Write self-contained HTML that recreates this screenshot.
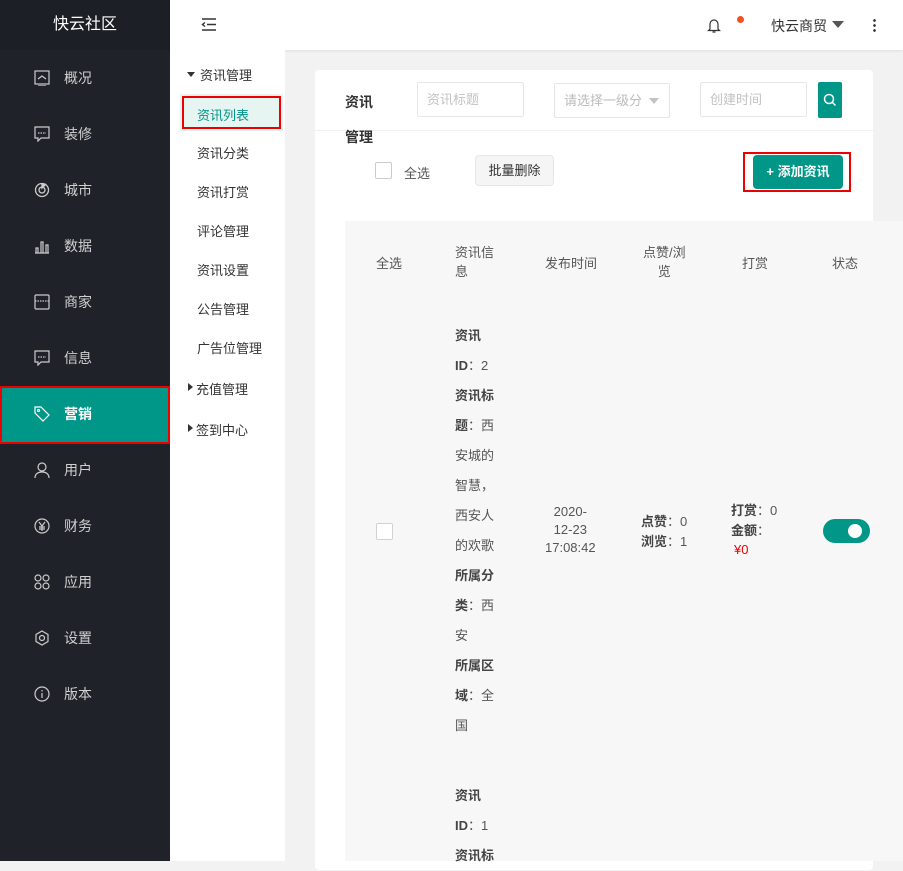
<!DOCTYPE html>
<html><head><meta charset="utf-8"><style>
*{margin:0;padding:0;box-sizing:border-box}
body{width:903px;height:861px;overflow:hidden;background:#f2f2f2;font-family:"Liberation Sans","Noto Sans CJK SC",sans-serif;font-size:13px;color:#333;position:relative}
.a{position:absolute;white-space:nowrap}
#side{position:absolute;left:0;top:0;width:170px;height:861px;background:#20222a}
#side .hd{height:50px;background:#1d1f26;color:#fff;font-size:16px;text-align:center;line-height:50px}
.mi{position:absolute;left:0;width:170px;height:56px;color:#d0d0d0;font-size:14px}
.mi svg{position:absolute;left:34px;top:20px}
.mi span{position:absolute;left:64px;top:18px}
#sub{position:absolute;left:170px;top:50px;width:115px;height:811px;background:#fff}
#top{position:absolute;left:170px;top:0;width:733px;height:50px;background:#fff;box-shadow:0 1px 3px rgba(0,0,0,.08)}
.card{position:absolute;left:315px;top:70px;width:558px;height:800px;background:#fff;border-radius:4px}
.inp{position:absolute;height:35px;border:1px solid #e6e6e6;border-radius:2px;color:#c2c2c2;font-size:13px;line-height:33px;padding-left:9px}
.tb{position:absolute;left:345px;top:221px;width:558px;height:640px;background:#f7f7f7}
.ln{position:absolute;left:455px;font-size:13px;color:#555}
b{font-weight:bold;color:#444}
</style></head><body>
<div id="side"><div class="hd">快云社区</div>
<div class="mi" style="top:50px"><svg width="16" height="16" viewBox="0 0 16 16" fill="none" stroke="#ccc" stroke-width="1.2"><rect x="1" y="1" width="14" height="13"/><path d="M4 9l4-3 4 3M4 16h8"/></svg><span>概况</span></div>
<div class="mi" style="top:106px"><svg width="16" height="16" viewBox="0 0 16 16" fill="none" stroke="#ccc" stroke-width="1.2"><path d="M1 1h14v11H7l-3 3v-3H1z"/><path d="M4 7h8" stroke-dasharray="1.5 1"/></svg><span>装修</span></div>
<div class="mi" style="top:162px"><svg width="16" height="16" viewBox="0 0 16 16" fill="none" stroke="#ccc" stroke-width="1.3"><circle cx="8" cy="8" r="6.5"/><circle cx="8" cy="8" r="3"/><path d="M8 1v5l4-4" fill="#ccc"/></svg><span>城市</span></div>
<div class="mi" style="top:218px"><svg width="16" height="16" viewBox="0 0 16 16" fill="none" stroke="#ccc" stroke-width="1.2"><path d="M1 15h14M2 10h2v5H2zM7 4h2v11H7zM12 7h2v8h-2z"/></svg><span>数据</span></div>
<div class="mi" style="top:274px"><svg width="16" height="16" viewBox="0 0 16 16" fill="none" stroke="#ccc" stroke-width="1.2"><rect x="1" y="1" width="14" height="14" rx="1"/><path d="M1 7h14" stroke-dasharray="1.5 1"/></svg><span>商家</span></div>
<div class="mi" style="top:330px"><svg width="16" height="16" viewBox="0 0 16 16" fill="none" stroke="#ccc" stroke-width="1.2"><path d="M1 1h14v11H7l-3 3v-3H1z"/><path d="M4 7h8" stroke-dasharray="1.5 1"/></svg><span>信息</span></div>
<div class="mi" style="top:386px;height:58px;background:#009688;border:2px solid #e00;color:#fff"><svg width="16" height="16" viewBox="0 0 16 16" fill="none" stroke="#fff" stroke-width="1.2" style="left:32px;top:18px"><path d="M1 1h6l8 8-6 6-8-8z"/><circle cx="4.5" cy="4.5" r="1"/></svg><span style="left:62px;top:16px;font-weight:bold">营销</span></div>
<div class="mi" style="top:442px"><svg width="16" height="16" viewBox="0 0 16 16" fill="none" stroke="#ccc" stroke-width="1.2"><circle cx="8" cy="5" r="4"/><path d="M1 16c0-4 3-6 7-6s7 2 7 6"/></svg><span>用户</span></div>
<div class="mi" style="top:498px"><svg width="16" height="16" viewBox="0 0 16 16" fill="none" stroke="#ccc" stroke-width="1.2"><circle cx="8" cy="8" r="7"/><path d="M5 4l3 4 3-4M8 8v5M5 9h6M5 11h6"/></svg><span>财务</span></div>
<div class="mi" style="top:554px"><svg width="16" height="16" viewBox="0 0 16 16" fill="none" stroke="#ccc" stroke-width="1.2"><circle cx="4" cy="4" r="3"/><circle cx="12" cy="4" r="3"/><circle cx="4" cy="12" r="3"/><circle cx="12" cy="12" r="3"/></svg><span>应用</span></div>
<div class="mi" style="top:610px"><svg width="16" height="16" viewBox="0 0 16 16" fill="none" stroke="#ccc" stroke-width="1.2"><path d="M8 1l6 3.5v7L8 15l-6-3.5v-7z"/><circle cx="8" cy="8" r="2.5"/></svg><span>设置</span></div>
<div class="mi" style="top:666px"><svg width="16" height="16" viewBox="0 0 16 16" fill="none" stroke="#ccc" stroke-width="1.2"><circle cx="8" cy="8" r="7"/><path d="M8 7v5M8 4v1.5"/></svg><span>版本</span></div>
</div>
<div id="top">
<svg class="a" style="left:31px;top:18px" width="15" height="13" viewBox="0 0 15 13" fill="none" stroke="#333" stroke-width="1.4"><path d="M1 1h14M6 6.5h9M1 12h14M4 4.5l-2.5 2 2.5 2"/></svg>
<svg class="a" style="left:537px;top:18px" width="14" height="15" viewBox="0 0 14 15" fill="none" stroke="#333" stroke-width="1.2"><path d="M3 11V6a4 4 0 0 1 8 0v5l1.5 1.5h-11zM5.5 14h3"/></svg>
<div class="a" style="left:567px;top:16px;width:7px;height:7px;border-radius:50%;background:#f4511e"></div>
<div class="a" style="left:601px;top:16px;font-size:14px;color:#333">快云商贸</div>
<div class="a" style="left:662px;top:21px;border:6px solid transparent;border-top:7px solid #555;border-bottom:0"></div>
<div class="a" style="left:703px;top:18px;width:3px;height:14px;background:radial-gradient(circle,#333 1.2px,transparent 1.5px) 0 0/3px 5px"></div>
</div>
<div id="sub">
<div class="a" style="left:17px;top:22px;border:4px solid transparent;border-top:5px solid #333;border-bottom:0"></div>
<div class="a" style="left:30px;top:15px;color:#333">资讯管理</div>
<div class="a" style="left:10px;top:44px;width:103px;height:37px;background:#e6f4f2"></div>
<div class="a" style="left:12px;top:46px;width:99px;height:33px;border:2px solid #e00"></div>
<div class="a" style="left:27px;top:55px;color:#009688">资讯列表</div>
<div class="a" style="left:27px;top:93px">资讯分类</div>
<div class="a" style="left:27px;top:132px">资讯打赏</div>
<div class="a" style="left:27px;top:171px">评论管理</div>
<div class="a" style="left:27px;top:210px">资讯设置</div>
<div class="a" style="left:27px;top:249px">公告管理</div>
<div class="a" style="left:27px;top:288px">广告位管理</div>
<div class="a" style="left:18px;top:333px;border:4px solid transparent;border-left:5px solid #333;border-right:0"></div>
<div class="a" style="left:26px;top:329px">充值管理</div>
<div class="a" style="left:18px;top:374px;border:4px solid transparent;border-left:5px solid #333;border-right:0"></div>
<div class="a" style="left:26px;top:370px">签到中心</div>
</div>
<div class="card">
<div class="a" style="left:0;top:60px;width:558px;height:1px;background:#f0f0f0"></div>
<div class="a" style="left:30px;top:22px;font-weight:bold;font-size:14px">资讯</div>
<div class="a" style="left:30px;top:57px;font-weight:bold;font-size:14px">管理</div>
<div class="inp" style="left:102px;top:12px;width:107px">资讯标题</div>
<div class="inp" style="left:239px;top:13px;width:116px;color:#bbb">请选择一级分
<div class="a" style="left:94px;top:14px;border:5px solid transparent;border-top:6px solid #c2c2c2;border-bottom:0"></div></div>
<div class="inp" style="left:385px;top:12px;width:107px">创建时间</div>
<div class="a" style="left:503px;top:12px;width:24px;height:36px;background:#009688;border-radius:2px"><svg style="position:absolute;left:5px;top:11px" width="14" height="14" viewBox="0 0 14 14" fill="none" stroke="#fff" stroke-width="1.5"><circle cx="6" cy="6" r="4.5"/><path d="M9.5 9.5l3 3"/></svg></div>
<div class="a" style="left:60px;top:92px;width:17px;height:17px;border:1px solid #ccc;border-radius:2px;background:#fff"></div>
<div class="a" style="left:89px;top:93px;color:#555">全选</div>
<div class="a" style="left:160px;top:85px;width:79px;height:31px;border:1px solid #e6e6e6;border-radius:4px;background:#f5f5f5;text-align:center;line-height:29px;color:#333">批量删除</div>
<div class="a" style="left:428px;top:82px;width:108px;height:40px;border:2px solid #e00"></div>
<div class="a" style="left:438px;top:85px;width:90px;height:34px;background:#009688;border-radius:4px;color:#fff;text-align:center;line-height:34px;font-weight:bold">+ 添加资讯</div>
</div>
<div class="tb"></div>
<div class="a" style="left:376px;top:253px;color:#555">全选</div>
<div class="a" style="left:455px;top:243px;color:#555;line-height:19px">资讯信<br>息</div>
<div class="a" style="left:545px;top:253px;color:#555">发布时间</div>
<div class="a" style="left:643px;top:243px;color:#555;line-height:19px;text-align:center">点赞/浏<br>览</div>
<div class="a" style="left:742px;top:253px;color:#555">打赏</div>
<div class="a" style="left:832px;top:253px;color:#555">状态</div>
<div class="ln a" style="top:321px;line-height:30px"><b>资讯</b><br><b>ID</b>：2<br><b>资讯标</b><br><b>题</b>：西<br>安城的<br>智慧，<br>西安人<br>的欢歌<br><b>所属分</b><br><b>类</b>：西<br>安<br><b>所属区</b><br><b>域</b>：全<br>国</div>
<div class="ln a" style="top:781px;line-height:30px"><b>资讯</b><br><b>ID</b>：1<br><b>资讯标</b></div>
<div class="a" style="left:376px;top:523px;width:17px;height:17px;border:1px solid #d2d2d2;border-radius:2px;background:#fff"></div>
<div class="a" style="left:545px;top:503px;line-height:18px;color:#555;text-align:center">2020-<br>12-23<br>17:08:42</div>
<div class="a" style="left:641px;top:512px;line-height:20px;color:#555"><b>点赞</b>：0<br><b>浏览</b>：1</div>
<div class="a" style="left:731px;top:501px;line-height:19.5px;color:#555"><b>打赏</b>：0<br><b>金额</b>：<br><span style="color:#e00;padding-left:3px">¥0</span></div>
<div class="a" style="left:823px;top:519px;width:47px;height:24px;border-radius:12px;background:#009688"><div class="a" style="left:25px;top:5px;width:14px;height:14px;border-radius:50%;background:#fff"></div></div>
</body></html>
